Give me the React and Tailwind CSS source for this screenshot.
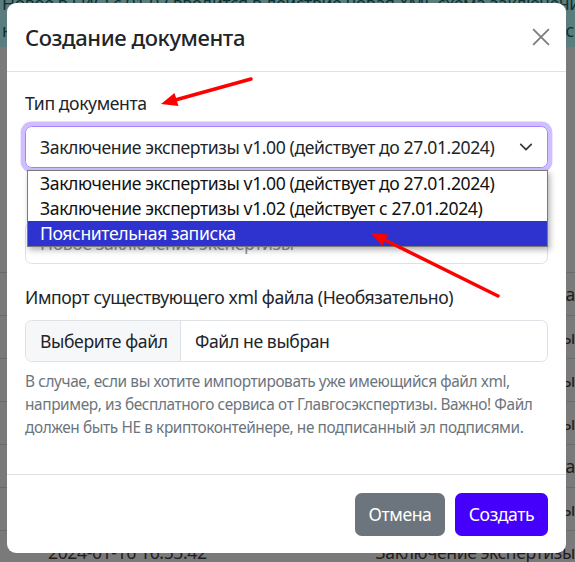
import { useState } from "react";

const rows = [
  { date: "2024-01-22 11:08:15", kind: "Пояснительная записка" },
  { date: "2024-01-19 09:41:02", kind: "Заключение экспертизы" },
  { date: "2024-01-18 17:22:51", kind: "Заключение экспертизы" },
  { date: "2024-01-17 14:05:33", kind: "Заключение экспертизы" },
  { date: "2024-01-17 10:12:09", kind: "Пояснительная записка" },
  { date: "2024-01-16 18:30:27", kind: "Заключение экспертизы" },
  { date: "2024-01-16 16:53:42", kind: "Заключение экспертизы" },
];

const options = [
  "Заключение экспертизы v1.00 (действует до 27.01.2024)",
  "Заключение экспертизы v1.02 (действует с 27.01.2024)",
  "Пояснительная записка",
];

function Chevron() {
  return (
    <svg width="14" height="14" viewBox="0 0 16 16" fill="none">
      <path d="M2 5l6 6 6-6" stroke="#343a40" strokeWidth="2" strokeLinecap="round" strokeLinejoin="round" />
    </svg>
  );
}

function CloseIcon() {
  return (
    <svg width="18" height="18" viewBox="0 0 16 16" fill="none">
      <path d="M1 1l14 14M15 1L1 15" stroke="#7d7d7d" strokeWidth="1.6" />
    </svg>
  );
}

// red annotation arrows drawn over the dialog
function Arrows() {
  return (
    <svg className="absolute inset-0 z-20 pointer-events-none" width="575" height="562">
      <line x1="251" y1="79" x2="177" y2="99.5" stroke="#ff0000" strokeWidth="3.5" strokeLinecap="round" />
      <polygon points="161,104 178.5,106 174.5,93" fill="#ff0000" />
      <line x1="498" y1="296" x2="385" y2="240" stroke="#ff0000" strokeWidth="3.5" strokeLinecap="round" />
      <polygon points="371,233 388.5,234.5 382,246" fill="#ff0000" />
    </svg>
  );
}

export default function App() {
  const [selected] = useState(2);

  return (
    <div
      className="relative w-[575px] h-[562px] overflow-hidden bg-[#7a7a7a] tracking-[-0.4px]"
      style={{ fontFamily: '"Noto Sans", "Open Sans", sans-serif' }}
    >
      {/* page behind the backdrop */}
      <div className="h-[57px] bg-[#5c7d7e] text-[#12302f] text-[17.6px] leading-[27px] -mt-[10px] px-[2px] whitespace-nowrap overflow-hidden">
        <div>Новое в ЕИС: с 01.02 вводится в действие новая XML схема заключения экспертизы.</div>
        <div>но уже сейчас можно создавать и проверять документы в новой версии схемы xml.</div>
      </div>
      <div className="h-[225px]" />
      {rows.map((r) => (
        <div
          key={r.date + r.kind}
          className="h-[43px] border-t border-[#6b6b6b] flex text-[17.6px] leading-[26px] pt-[8px] text-[#231c1c] whitespace-nowrap"
        >
          <div className="w-[415px] pl-[48px]">{r.date}</div>
          <div>{r.kind}</div>
        </div>
      ))}

      {/* dialog */}
      <div className="absolute left-[7px] top-[3px] w-[559px] h-[550px] bg-white rounded-[9px] flex flex-col text-[#212529]">
        <div className="h-[69px] shrink-0 border-b border-[#dee2e6] px-[18px] flex items-center justify-between">
          <h5 className="text-[22px] font-medium leading-[33px]">Создание документа</h5>
          <button className="w-[30px] h-[30px] flex items-center justify-center mr-[-8px]">
            <CloseIcon />
          </button>
        </div>

        <div className="h-[402px] shrink-0 px-[18px] pt-[18px]">
          <label className="block text-[17.6px] leading-[27px] mb-[9px]">Тип документа</label>
          <div className="relative">
            <div className="h-[42px] rounded-[6.6px] border border-[#a282ff] shadow-[0_0_0_4.4px_rgba(68,0,255,0.25)] flex items-center justify-between pl-[14px] pr-[14px] text-[17.6px]">
              <span>{options[0]}</span>
              <Chevron />
            </div>

            {/* open native list */}
            <div className="absolute z-10 left-[2px] right-0 top-[44px] bg-white border border-[#7a7a7a] shadow-[2px_3px_6px_rgba(0,0,0,0.3)]">
              {options.map((o, i) => (
                <div
                  key={o}
                  className={
                    i === selected
                      ? "h-[25px] leading-[25px] pl-[12px] text-[17.6px] bg-[#2e33d0] text-white"
                      : "h-[25px] leading-[25px] pl-[12px] text-[17.6px] text-[#111]"
                  }
                >
                  {o}
                </div>
              ))}
            </div>
          </div>

          <div className="mt-[18px]">
            <label className="block pl-[6px] text-[17.6px] leading-[27px] mb-[9px]">Наименование документа</label>
            <div className="h-[42px] rounded-[6.6px] border border-[#dee2e6] flex items-center pl-[14px] text-[17.6px] text-[#8d9297]">
              Новое заключение экспертизы
            </div>
          </div>

          <div className="mt-[20px]">
            <label className="block text-[17.6px] leading-[27px] mb-[9px]">
              Импорт существующего xml файла (Необязательно)
            </label>
            <div className="h-[42px] rounded-[6.6px] border border-[#dee2e6] flex items-stretch text-[17.6px] overflow-hidden">
              <div className="w-[155px] bg-[#f6f7f9] border-r border-[#dee2e6] flex items-center pl-[14px]">
                Выберите файл
              </div>
              <div className="flex items-center pl-[14px]">Файл не выбран</div>
            </div>
            <p className="mt-[8px] text-[15.4px] leading-[23.1px] text-[#6c757d] whitespace-nowrap">
              В случае, если вы хотите импортировать уже имеющийся файл xml,
              <br />
              например, из бесплатного сервиса от Главгосэкспертизы. Важно! Файл
              <br />
              должен быть НЕ в криптоконтейнере, не подписанный эл подписями.
            </p>
          </div>
        </div>

        <div className="flex-1 border-t border-[#dee2e6] flex justify-end items-start gap-[10px] pt-[18px] pr-[18px]">
          <button className="h-[43px] w-[90px] rounded-[6.6px] bg-[#6c757d] text-white text-[17.6px]">
            Отмена
          </button>
          <button className="h-[43px] w-[93px] rounded-[6.6px] bg-[#4400fb] text-white text-[17.6px]">
            Создать
          </button>
        </div>
      </div>

      <Arrows />
    </div>
  );
}
